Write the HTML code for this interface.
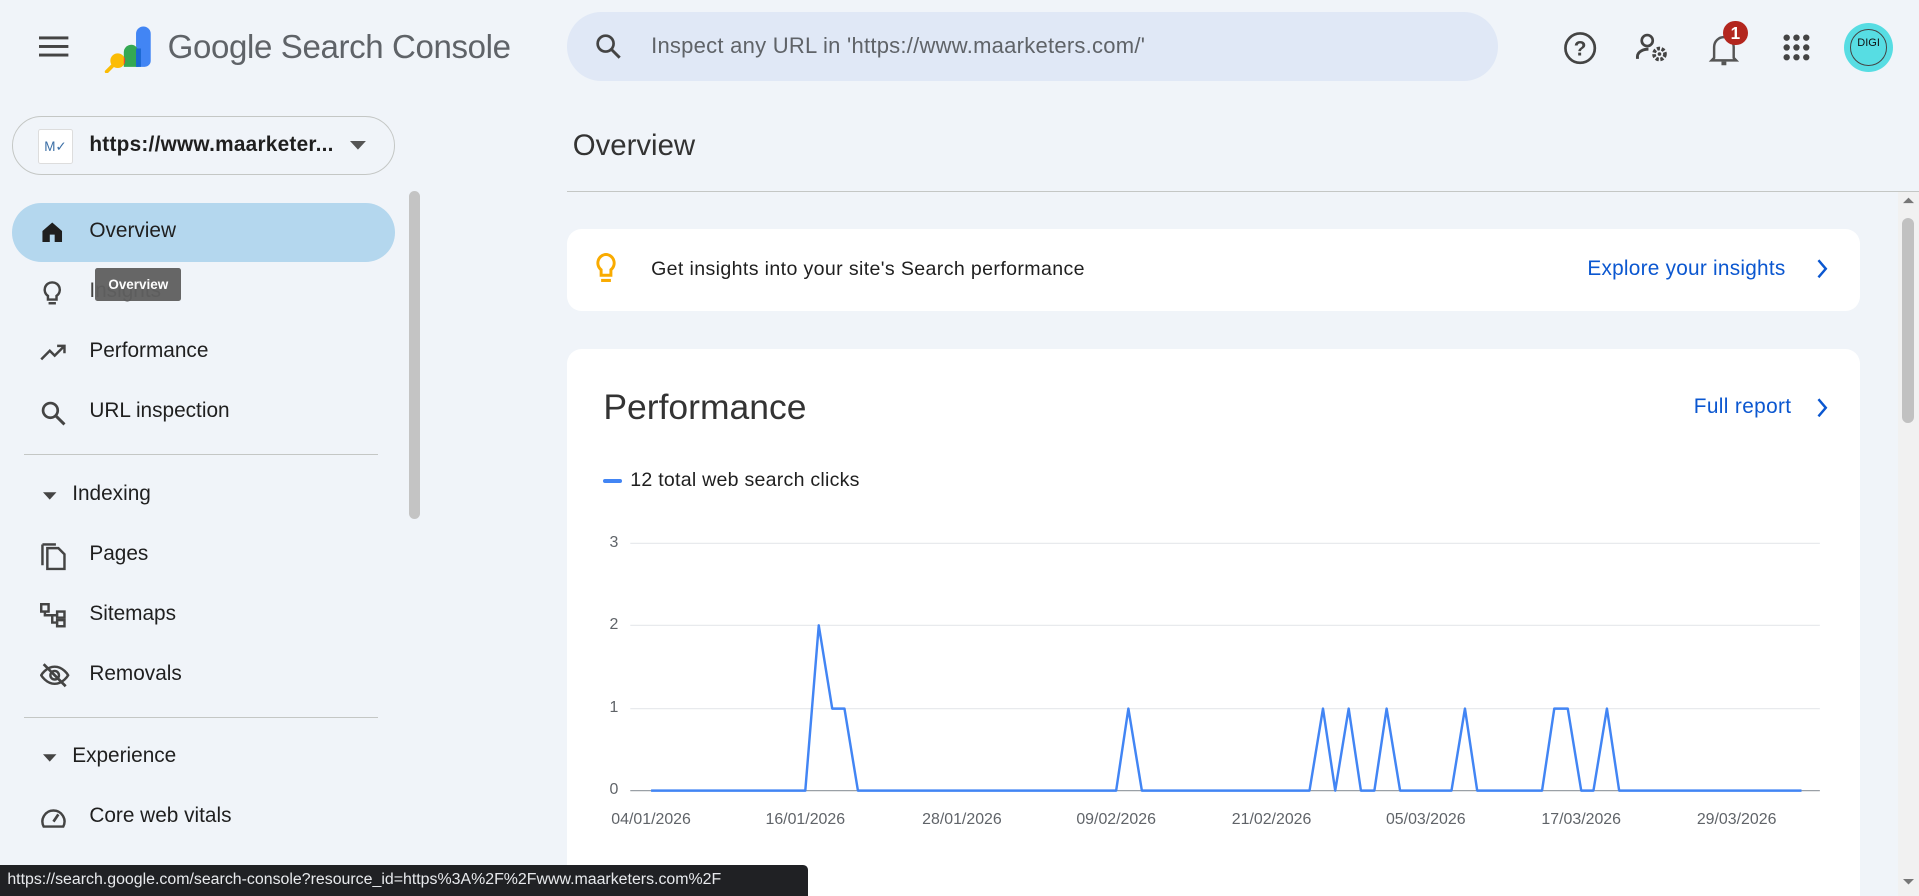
<!DOCTYPE html>
<html><head><meta charset="utf-8"><style>
html,body{margin:0;padding:0;width:1919px;height:896px;overflow:hidden;background:#f0f4f9;font-family:"Liberation Sans",Arial,sans-serif}
#w{zoom:1.22385;width:1568px;height:732px;position:relative;overflow:hidden}
.a{position:absolute}
.nav{position:absolute;left:73px;font-size:17px;color:#1f1f1f}
.ic{position:absolute;left:33px}
.xl{position:absolute;top:663px;font-size:13px;color:#5f6368;width:100px;text-align:center}
.yl{position:absolute;left:498px;font-size:13px;color:#5f6368}
</style></head><body><div id="w">
<!-- header -->
<svg class="a" style="left:32px;top:28px" width="24" height="20"><rect y="2" width="24" height="2.4" fill="#444"/><rect y="9" width="24" height="2.4" fill="#444"/><rect y="16" width="24" height="2.4" fill="#444"/></svg>
<svg class="a" style="left:84px;top:20px" width="42" height="40" viewBox="0 0 42 40">
<path d="M27 33V8a6 6 0 0 1 12 0v22a5 5 0 0 1-5 5h-7z" fill="#4285f4"/>
<path d="M17 35V23a6 6 0 0 1 12 0v12z" fill="#34a853"/>
<rect x="27" y="20" width="4" height="15" fill="#1967d2"/>
<circle cx="12" cy="30" r="6" fill="#fbbc04"/><path d="M17 26.5a6 6 0 0 1 0 7z" fill="#ea4335"/>
<line x1="8" y1="34" x2="3" y2="39" stroke="#fbbc04" stroke-width="3" stroke-linecap="round"/>
</svg>
<div class="a" style="left:137px;top:24px;font-size:27px;color:#5f6368;letter-spacing:-0.3px">Google Search Console</div>
<div class="a" style="left:463px;top:10px;width:761px;height:56px;border-radius:28px;background:#e0e8f6"></div>
<svg class="a" style="left:485px;top:26px" width="24" height="24" viewBox="0 0 24 24"><circle cx="9.5" cy="9.5" r="6.5" fill="none" stroke="#444" stroke-width="2.2"/><line x1="14.5" y1="14.5" x2="21" y2="21" stroke="#444" stroke-width="2.4"/></svg>
<div class="a" style="left:532px;top:27px;font-size:18px;color:#5f6368;letter-spacing:0.2px">Inspect any URL in 'https://www.maarketers.com/'</div>
<svg class="a" style="left:1277px;top:25px" width="28" height="28" viewBox="0 0 28 28"><circle cx="14" cy="14" r="12" fill="none" stroke="#444" stroke-width="2.2"/><text x="14" y="20" text-anchor="middle" font-size="17" font-family="Liberation Sans" fill="#444" font-weight="bold">?</text></svg>
<svg class="a" style="left:1336px;top:26px" width="28" height="26" viewBox="0 0 28 26"><circle cx="10" cy="7" r="4.5" fill="none" stroke="#444" stroke-width="2.2"/><path d="M2 22v-2c0-4 5-6 9-6" fill="none" stroke="#444" stroke-width="2.4"/><circle cx="20" cy="18" r="4.5" fill="none" stroke="#444" stroke-width="3" stroke-dasharray="2.5 1.3"/><circle cx="20" cy="18" r="1.5" fill="#444"/></svg>
<svg class="a" style="left:1396px;top:25px" width="26" height="30" viewBox="0 0 26 30"><path d="M5 22V13a8 8 0 0 1 16 0v9l2 2H3z" fill="none" stroke="#555" stroke-width="2"/><rect x="11" y="25" width="4" height="3" fill="#555"/></svg>
<div class="a" style="left:1408px;top:17px;width:20px;height:20px;border-radius:10px;background:#b3261e;color:#fff;font-size:14px;font-weight:bold;text-align:center;line-height:20px">1</div>
<svg class="a" style="left:1457px;top:28px" width="22" height="22"><g fill="#444"><circle cx="3" cy="3" r="2.6"/><circle cx="11" cy="3" r="2.6"/><circle cx="19" cy="3" r="2.6"/><circle cx="3" cy="11" r="2.6"/><circle cx="11" cy="11" r="2.6"/><circle cx="19" cy="11" r="2.6"/><circle cx="3" cy="19" r="2.6"/><circle cx="11" cy="19" r="2.6"/><circle cx="19" cy="19" r="2.6"/></g></svg>
<div class="a" style="left:1507px;top:19px;width:40px;height:40px;border-radius:20px;background:#57dde3"></div>
<div class="a" style="left:1512px;top:24px;width:28px;height:28px;border-radius:15px;border:1px solid #444;font-size:9px;text-align:center;line-height:22px;color:#111">DIGI</div>
<!-- sidebar -->
<div class="a" style="left:10px;top:95px;width:311px;height:46px;border:1px solid #c4c7c5;border-radius:25px"></div>
<div class="a" style="left:31px;top:105px;width:27px;height:27px;background:#fff;border:1px solid #ddd;border-radius:2px;font-size:11px;color:#3a6ea5;text-align:center;line-height:27px">M✓</div>
<div class="a" style="left:73px;top:109px;font-size:17px;color:#1f1f1f;font-weight:bold;letter-spacing:0.2px">https://www.maarketer...</div>
<svg class="a" style="left:286px;top:115px" width="14" height="8"><path d="M0 0h13l-6.5 7z" fill="#555"/></svg>
<div class="a" style="left:10px;top:166px;width:313px;height:48px;border-radius:24px;background:#b4d7ee"></div>
<svg class="ic" style="top:180px" width="20" height="20" viewBox="0 0 20 20"><path d="M10 2L2 9v9h6v-6h4v6h6V9z" fill="#1f1f1f"/></svg>
<div class="nav" style="top:179px">Overview</div>
<svg class="ic" style="top:229px" width="20" height="22" viewBox="0 0 20 22"><path d="M10 2a6 6 0 0 0-3.5 11v3h7v-3A6 6 0 0 0 10 2z" fill="none" stroke="#444" stroke-width="2"/><rect x="7" y="18" width="6" height="2" fill="#444"/></svg>
<div class="nav" style="top:228px;color:#444">Insights</div>
<div class="a" style="left:78px;top:219px;width:70px;height:27px;background:#5f5f5f;opacity:0.95;border-radius:2px;color:#fff;font-size:11px;font-weight:bold;text-align:center;line-height:27px">Overview</div>
<svg class="ic" style="top:279px" width="22" height="18" viewBox="0 0 22 18"><path d="M1 15l7-7 4 4 8-8M14 4h6v6" fill="none" stroke="#444" stroke-width="2"/></svg>
<div class="nav" style="top:277px">Performance</div>
<svg class="ic" style="top:327px" width="22" height="22" viewBox="0 0 22 22"><circle cx="8.5" cy="8.5" r="6" fill="none" stroke="#444" stroke-width="2.2"/><line x1="13" y1="13" x2="20" y2="20" stroke="#444" stroke-width="2.4"/></svg>
<div class="nav" style="top:326px">URL inspection</div>
<div class="a" style="left:20px;top:371px;width:289px;height:1px;background:#c4c7c5"></div>
<svg class="a" style="left:35px;top:401px" width="12" height="8"><path d="M0 1h11l-5.5 6z" fill="#444"/></svg>
<div class="nav" style="top:394px;left:59px">Indexing</div>
<svg class="ic" style="top:443px" width="22" height="24" viewBox="0 0 22 24"><path d="M6 5h9l5 5v12H6z M2 2v17" fill="none" stroke="#444" stroke-width="2"/><path d="M2 2h11" stroke="#444" stroke-width="2"/></svg>
<div class="nav" style="top:443px">Pages</div>
<svg class="ic" style="top:493px" width="22" height="20" viewBox="0 0 22 20"><rect x="1" y="1" width="6" height="6" fill="none" stroke="#444" stroke-width="2"/><rect x="14" y="7" width="6" height="5" fill="none" stroke="#444" stroke-width="2"/><rect x="14" y="14" width="6" height="5" fill="none" stroke="#444" stroke-width="2"/><path d="M4 7v3h10M10 10v6h4" fill="none" stroke="#444" stroke-width="2"/></svg>
<div class="nav" style="top:492px">Sitemaps</div>
<svg class="ic" style="top:542px" width="24" height="20" viewBox="0 0 24 20"><path d="M1 10s4-7 11-7 11 7 11 7-4 7-11 7S1 10 1 10z" fill="none" stroke="#444" stroke-width="2"/><circle cx="12" cy="10" r="3.5" fill="none" stroke="#444" stroke-width="2"/><line x1="3" y1="1" x2="21" y2="19" stroke="#444" stroke-width="2.2"/></svg>
<div class="nav" style="top:541px">Removals</div>
<div class="a" style="left:20px;top:586px;width:289px;height:1px;background:#c4c7c5"></div>
<svg class="a" style="left:35px;top:615px" width="12" height="8"><path d="M0 1h11l-5.5 6z" fill="#444"/></svg>
<div class="nav" style="top:608px;left:59px">Experience</div>
<svg class="ic" style="top:659px" width="22" height="18" viewBox="0 0 22 18"><path d="M3 16a9 9 0 1 1 16 0z" fill="none" stroke="#444" stroke-width="2"/><line x1="11" y1="12" x2="15" y2="6" stroke="#444" stroke-width="2.2"/></svg>
<div class="nav" style="top:657px">Core web vitals</div>
<div class="a" style="left:334px;top:156px;width:9px;height:268px;border-radius:5px;background:#c4c4c4"></div>
<!-- main -->
<div class="a" style="left:468px;top:105px;font-size:24px;color:#333">Overview</div>
<div class="a" style="left:463px;top:156px;width:1105px;height:1px;background:#c4c7c5"></div>
<div class="a" style="left:463px;top:187px;width:1057px;height:67px;background:#fff;border-radius:12px"></div>
<svg class="a" style="left:486px;top:206px" width="18" height="28" viewBox="0 0 18 28"><path d="M9 2a7 7 0 0 0-4 12.5V19h8v-4.5A7 7 0 0 0 9 2z" fill="none" stroke="#f9ab00" stroke-width="2.4"/><rect x="5" y="22" width="8" height="2.5" fill="#f9ab00"/></svg>
<div class="a" style="left:532px;top:211px;font-size:16px;color:#1f1f1f;letter-spacing:0.3px">Get insights into your site's Search performance</div>
<div class="a" style="left:1297px;top:210px;font-size:17px;color:#0b57d0;letter-spacing:0.2px">Explore your insights</div>
<svg class="a" style="left:1484px;top:212px" width="10" height="16"><path d="M2 1l6 7-6 7" fill="none" stroke="#0b57d0" stroke-width="2"/></svg>
<div class="a" style="left:463px;top:285px;width:1057px;height:460px;background:#fff;border-radius:12px"></div>
<div class="a" style="left:493px;top:316px;font-size:29px;color:#333">Performance</div>
<div class="a" style="left:1384px;top:323px;font-size:17px;color:#0b57d0;letter-spacing:0.3px">Full report</div>
<svg class="a" style="left:1484px;top:325px" width="10" height="16"><path d="M2 1l6 7-6 7" fill="none" stroke="#0b57d0" stroke-width="2"/></svg>
<div class="a" style="left:493px;top:391px;width:15px;height:4px;border-radius:2px;background:#4285f4"></div>
<div class="a" style="left:515px;top:383px;font-size:16px;color:#1f1f1f;letter-spacing:0.2px">12 total web search clicks</div>
<div class="yl" style="top:436px">3</div><div class="yl" style="top:503px">2</div><div class="yl" style="top:571px">1</div><div class="yl" style="top:638px">0</div>
<svg class="a" style="left:0;top:0" width="1568" height="732">
<g stroke="#e8eaed" stroke-width="1"><line x1="515" y1="444" x2="1487" y2="444"/><line x1="515" y1="511" x2="1487" y2="511"/><line x1="515" y1="579" x2="1487" y2="579"/></g>
<line x1="515" y1="646" x2="1487" y2="646" stroke="#9aa0a6"/>
<polyline fill="none" stroke="#4285f4" stroke-width="2" stroke-linejoin="round" points="532,646 658,646 669,511 680,579 690,579 701,646 912,646 922,579 933,646 1070,646 1081,579 1091,646 1102,579 1112,646 1123,646 1133,579 1144,646 1186,646 1197,579 1207,646 1260,646 1270,579 1281,579 1292,646 1302,646 1313,579 1323,646 1472,646"/>
</svg>
<div class="xl" style="left:482px">04/01/2026</div><div class="xl" style="left:608px">16/01/2026</div><div class="xl" style="left:736px">28/01/2026</div><div class="xl" style="left:862px">09/02/2026</div><div class="xl" style="left:989px">21/02/2026</div><div class="xl" style="left:1115px">05/03/2026</div><div class="xl" style="left:1242px">17/03/2026</div><div class="xl" style="left:1369px">29/03/2026</div>
<!-- right scrollbar -->
<div class="a" style="left:1551px;top:157px;width:17px;height:575px;background:#f1f1f1"></div>
<svg class="a" style="left:1555px;top:161px" width="9" height="6"><path d="M0 5l4.5-4.5L9 5z" fill="#777"/></svg>
<div class="a" style="left:1554px;top:178px;width:10px;height:168px;border-radius:5px;background:#c1c1c1"></div>
<svg class="a" style="left:1555px;top:718px" width="9" height="6"><path d="M0 0l4.5 4.5L9 0z" fill="#777"/></svg>
<!-- status bar -->
<div class="a" style="left:0;top:707px;width:660px;height:25px;background:#202124;border-top-right-radius:4px;color:#e8eaed;font-size:13px;line-height:25px;padding-left:6px;box-sizing:border-box">https://search.google.com/search-console?resource_id=https%3A%2F%2Fwww.maarketers.com%2F</div>
</div></body></html>
